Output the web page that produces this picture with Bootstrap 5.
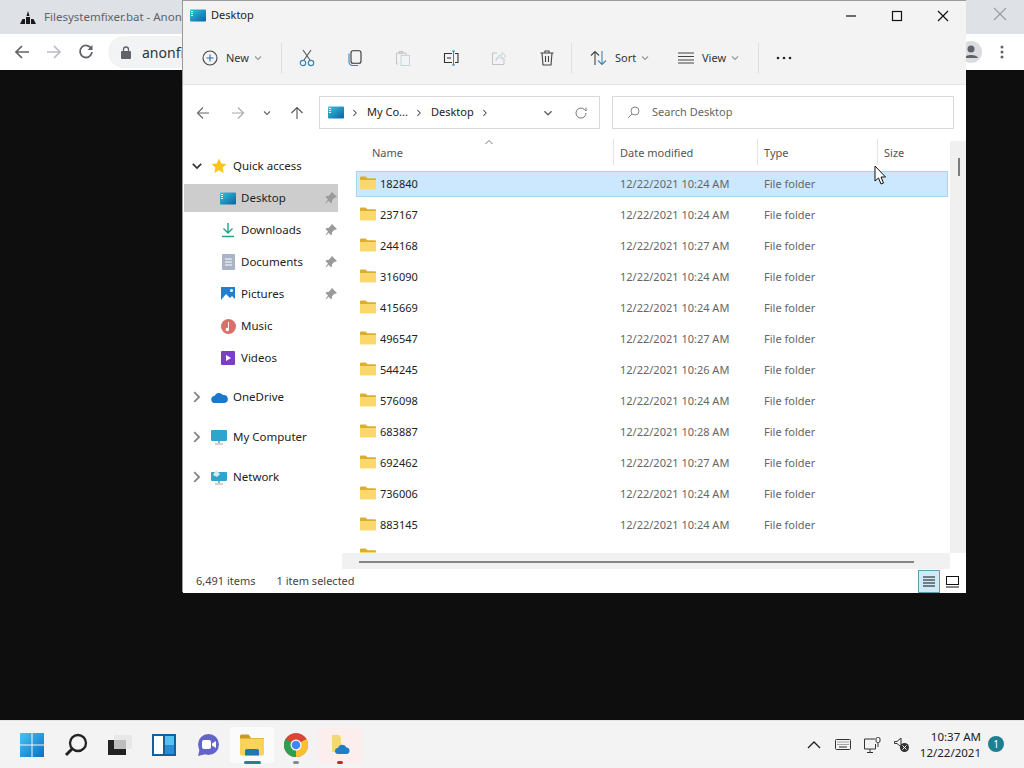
<!DOCTYPE html>
<html lang="en">
<head>
<meta charset="UTF-8">
<meta name="viewport" content="width=device-width, initial-scale=1.0">
<title>Desktop</title>
<link href="https://cdn.jsdelivr.net/npm/bootstrap@5.3.0/dist/css/bootstrap.min.css" rel="stylesheet">
<style>
html, body { height: 100%; }
body { width: 1024px; height: 768px; overflow: hidden; background: #0e0e0e; font-family: "Noto Sans", "Open Sans", sans-serif; font-size: 11px; color: #222; }
.desk-area { position: relative; height: 720px; background: #0e0e0e; }

/* chrome behind */
.chrome-win { position: absolute; left: 0; top: 0; width: 1024px; height: 70px; }
.chrome-tabs { height: 34px; background: #dee1e6; padding-left: 20px; color: #5f6368; }
.chrome-tabs .tab-title { margin-left: 8px; font-size: 11.500px; }
.chrome-close { position: absolute; left: 993px; top: 7px; }
.chrome-tools { height: 36px; background: #fff; padding-left: 14px; }
.omni { position: absolute; left: 108px; top: 36px; width: 300px; height: 32px; border-radius: 16px; background: #f1f3f4; padding-left: 13px; font-size: 14px; gap: 11px; color: #333; }
.chrome-side { position: absolute; left: 966px; top: 34px; width: 58px; height: 36px; }
.avatar-ic { position: absolute; left: -6px; top: 7px; }
.kebab-ic { position: absolute; left: 34px; top: 10px; }

/* explorer */
.exp-win { position: absolute; left: 182px; top: 0; width: 784px; height: 592px; background: #fff; border: 1px solid #9a9a9a; border-bottom: 0; border-right: 0; }
.exp-title { height: 29px; background: #f3f3f3; padding-left: 7px; color: #222; }
.exp-title span { margin-left: 5px; }
.win-btns { margin-left: auto; }
.win-btn { width: 46px; height: 29px; }
.cmd-bar { height: 55px; background: #f3f3f3; border-bottom: 1px solid #e5e5e5; padding: 2px 0 0 19px; }
.cmd-sep { width: 1px; height: 30px; background: #dfdfdf; flex: none; }
.cmd-lbl { color: #333; }
.cmd-ic { width: 48px; flex: none; }
.cmd-group { flex: none; }
.grp-new { width: 79px; }
.grp-sort { width: 88px; margin-left: 18px; }
.grp-view { width: 80px; }
.first-ic { margin-left: 1px; }
.more-ic { margin-left: 17px; }
.addr-row { height: 54px; padding: 11px 12px 0 2px; }
.nav-ic { width: 35px; height: 33px; flex: none; }
.nav-drop { width: 24px; height: 33px; flex: none; }
.addr-box { width: 281px; height: 33px; border: 1px solid #d9d9d9; margin-left: 5px; padding-left: 8px; color: #222; flex: none; }
.addr-box .crumb { margin: 0 8px 0 7px; }
.addr-drop { margin-left: auto; margin-right: 20px; }
.addr-ref { margin-right: 11px; }
.search-box { width: 342px; height: 33px; border: 1px solid #d9d9d9; margin-left: 12px; padding-left: 14px; color: #666; flex: none; }
.search-box span { margin-left: 12px; }
.exp-main { height: 430px; }
.side-pane { width: 158px; padding-top: 10px; flex: none; font-size: 11.500px; }
.tree-top { height: 33px; padding-left: 7px; }
.tree-root { height: 40px; padding-left: 7px; }
.tree-top .tree-ic, .tree-root .tree-ic { margin-left: 5px; }
.tree-root .tree-name, .tree-top .tree-name { margin-left: 4px; }
.tree-kid { height: 32px; padding-left: 35px; position: relative; }
.tree-kid .tree-name { margin-left: 3px; }
.tree-kid.on { background: #cdcdcd; height: 28px; margin: 2px 3px 2px 1px; padding-left: 34px; }
.tree-pin { position: absolute; right: 3px; top: 50%; margin-top: -7px; }
.tree-kid.on .tree-pin { right: 0; }
.tree-ic { width: 20px; display: flex; justify-content: center; }
.root-gap { height: 3px; }

.file-pane { position: relative; width: 626px; height: 414px; overflow: hidden; padding-left: 15px; }
.head-row { display: grid; grid-template-columns: 257px 144px 120px 1fr; height: 32px; color: #555; position: relative; }
.head-cell { padding: 2px 0 0 6px; border-left: 1px solid #e5e5e5; height: 26px; display: flex; align-items: center; }
.head-cell.first { border-left: 0; padding-left: 16px; }
.sort-mark { position: absolute; left: 128px; top: 0; }
.file-row { display: grid; grid-template-columns: 263px 144px 120px 1fr; height: 26px; margin-bottom: 5px; width: 592px; align-items: center; border: 1px solid transparent; color: #666; }
.file-row.sel { background: #cce8ff; border-color: #a9d6f5; }
.file-name { display: flex; align-items: center; padding-left: 3px; color: #222; gap: 4px; }
.file-name svg { margin-top: -2px; }
.vbar { position: absolute; left: 767px; top: 140px; width: 16px; height: 412px; background: #f0f0f0; }
.vthumb { position: absolute; left: 8px; top: 17px; width: 2px; height: 18px; background: #7d7d7d; }
.hbar { position: absolute; left: 159px; top: 552px; width: 608px; height: 16px; background: #f1f1f1; }
.hthumb { position: absolute; left: 17px; top: 8px; width: 555px; height: 2px; background: #868686; }
.status-bar { position: absolute; left: 0; right: 0; top: 568px; height: 24px; padding-left: 13px; color: #444; background: #fff; }
.status-bar .second { margin-left: 21px; }
.view-btns { position: absolute; left: 735px; top: 1px; width: 48px; height: 23px; }
.view-on { width: 22px; height: 23px; background: #cfe9f7; border: 1px solid #5f9db5; }
.view-off { width: 24px; height: 23px; }
.mouse-ptr { position: absolute; left: 874px; top: 165px; z-index: 5; }

/* taskbar */
.task-bar { position: relative; height: 48px; background: #f3f3f3; border-top: 1px solid #e4e4e4; padding-left: 10px; }
.task-ic { width: 44px; height: 36px; position: relative; }
.task-ic.open { background: #fbfbfb; border-radius: 4px; }
.task-ic.warn { background: #fdeeee; }
.run-dot { position: absolute; bottom: -1px; left: 50%; height: 3px; border-radius: 2px; }
.run-dot.long { width: 17px; margin-left: -8px; background: #2b7f86; }
.run-dot.short { width: 6px; margin-left: -3px; background: #8a8a8a; }
.run-dot.red { width: 6px; margin-left: -3px; background: #c8262c; }
.tray { margin-left: auto; padding-right: 43px; }
.tray-ic { width: 29px; }
.clock-txt { text-align: right; font-size: 11.500px; line-height: 16px; color: #222; margin-left: 4px; }
.notif { position: absolute; left: 988px; top: 15px; width: 16px; height: 16px; border-radius: 50%; background: #1f7f91; color: #fff; font-size: 10px; text-align: center; line-height: 16px; }
</style>
</head>
<body>
<svg width="0" height="0" class="position-absolute">
<defs>
<linearGradient id="gDesk" x1="0" y1="0" x2="1" y2="1"><stop offset="0" stop-color="#35c4d8"/><stop offset="1" stop-color="#0a62a8"/></linearGradient>
<linearGradient id="gWin" x1="0" y1="0" x2="1" y2="1"><stop offset="0" stop-color="#46c5f3"/><stop offset="1" stop-color="#0a6fc4"/></linearGradient>
<symbol id="i-folder" viewBox="0 0 16 14">
<path d="M0 1.500A1 1 0 0 1 1 .5h4.500l2 1.800H15a1 1 0 0 1 1 1V5H0z" fill="#dcae2f"/>
<path d="M0 4h16v8.500a1 1 0 0 1-1 1H1a1 1 0 0 1-1-1z" fill="#fbd86c"/>
</symbol>
<symbol id="i-desk" viewBox="0 0 16 13">
<rect width="16" height="12" y=".5" rx="1" fill="url(#gDesk)"/>
<path d="M1 2h2v1H1zM1 4h2v1H1zM1 6h2v1H1z" fill="#e8fbff"/>
</symbol>
<symbol id="i-pin" viewBox="0 0 14 14">
<path d="M8 1l5 5-1.500.8-1 0-2.500 2.500 0 2-1 1-2.500-2.500L2 12.500l-.5-.5L4 8.500 1.500 6l1-1 2 0L7 2.500l.2-1z" fill="#9a9a9a"/>
</symbol>
<symbol id="i-chev" viewBox="0 0 10 10">
<path d="M2 3.500l3 3 3-3" fill="none" stroke="currentColor" stroke-width="1.200"/>
</symbol>
<symbol id="i-right" viewBox="0 0 10 10">
<path d="M3 1.500l3.500 3.500-3.500 3.500" fill="none" stroke="currentColor" stroke-width="1.300"/>
</symbol>
</defs>
</svg>

<div class="desk-area">
  <!-- browser window behind -->
  <div class="chrome-win">
    <div class="chrome-tabs d-flex align-items-center">
      <svg width="16" height="14" viewBox="0 0 16 14"><path d="M0 14l2.500-5h2.500v5zM16 14l-2.500-5H11v5zM6 14V7h4v7zM6.500 6L8 1l1.500 5z" fill="#1b1b1b"/></svg>
      <span class="tab-title">Filesystemfixer.bat - Anon</span>
    </div>
    <svg class="chrome-close" width="14" height="14" viewBox="0 0 14 14"><path d="M1 1l12 12M13 1L1 13" stroke="#9aa0a6" stroke-width="1.300"/></svg>
    <div class="chrome-tools d-flex align-items-center">
      <svg width="16" height="16" viewBox="0 0 16 16"><path d="M15 8H2M8 2L2 8l6 6" fill="none" stroke="#5f6368" stroke-width="1.700"/></svg>
      <svg class="ms-3" width="16" height="16" viewBox="0 0 16 16"><path d="M1 8h13M8 2l6 6-6 6" fill="none" stroke="#b9bcc0" stroke-width="1.700"/></svg>
      <svg class="ms-3" width="16" height="16" viewBox="0 0 16 16"><path d="M13.500 5A6 6 0 1 0 14 8" fill="none" stroke="#5f6368" stroke-width="1.800"/><path d="M14.500 1v5h-5z" fill="#5f6368"/></svg>
    </div>
    <div class="omni d-flex align-items-center">
      <svg width="10" height="13" viewBox="0 0 10 13"><rect y="5" width="10" height="8" rx="1" fill="#5f6368"/><path d="M2.500 5V3.500a2.500 2.500 0 0 1 5 0V5" fill="none" stroke="#5f6368" stroke-width="1.300"/></svg>
      <span>anonfi</span>
    </div>
    <div class="chrome-side">
      <svg class="avatar-ic" width="22" height="22" viewBox="0 0 22 22"><circle cx="11" cy="11" r="11" fill="#dadce0"/><circle cx="11" cy="8" r="3.500" fill="#5f6368"/><path d="M4 17c1-4 13-4 14 0z" fill="#5f6368"/></svg>
      <svg class="kebab-ic" width="4" height="16" viewBox="0 0 4 16"><circle cx="2" cy="3" r="1.500" fill="#5f6368"/><circle cx="2" cy="8" r="1.500" fill="#5f6368"/><circle cx="2" cy="13" r="1.500" fill="#5f6368"/></svg>
    </div>
  </div>

  <!-- explorer window -->
  <div class="exp-win">
    <div class="exp-title d-flex align-items-center">
      <svg width="16" height="13"><use href="#i-desk"/></svg>
      <span>Desktop</span>
      <div class="win-btns d-flex">
        <div class="win-btn d-flex align-items-center justify-content-center"><svg width="12" height="12" viewBox="0 0 12 12"><path d="M1 6h10" stroke="#111" stroke-width="1.200"/></svg></div>
        <div class="win-btn d-flex align-items-center justify-content-center"><svg width="12" height="12" viewBox="0 0 12 12"><rect x="1.500" y="1.500" width="9" height="9" fill="none" stroke="#111" stroke-width="1.200"/></svg></div>
        <div class="win-btn d-flex align-items-center justify-content-center"><svg width="12" height="12" viewBox="0 0 12 12"><path d="M1 1l10 10M11 1L1 11" stroke="#111" stroke-width="1.200"/></svg></div>
      </div>
    </div>

    <div class="cmd-bar d-flex align-items-center">
      <div class="cmd-group grp-new d-flex align-items-center">
        <svg width="16" height="16" viewBox="0 0 16 16"><circle cx="8" cy="8" r="7" fill="none" stroke="#444" stroke-width="1.100"/><path d="M8 4.500v7M4.500 8h7" stroke="#2a6db0" stroke-width="1.100"/></svg>
        <span class="cmd-lbl ms-2">New</span>
        <svg class="ms-1" width="10" height="10" color="#999"><use href="#i-chev"/></svg>
      </div>
      <div class="cmd-sep"></div>
      <div class="cmd-ic first-ic d-flex justify-content-center"><svg width="16" height="18" viewBox="0 0 16 18"><path d="M4 1l7 10M12 1L5 11" stroke="#555" stroke-width="1.100" fill="none"/><circle cx="4" cy="14" r="2.700" fill="none" stroke="#3a85b8" stroke-width="1.200"/><circle cx="12" cy="14" r="2.700" fill="none" stroke="#3a85b8" stroke-width="1.200"/></svg></div>
      <div class="cmd-ic d-flex justify-content-center"><svg width="14" height="16" viewBox="0 0 14 16"><rect x="3" y=".7" width="10" height="12.500" rx="2" fill="none" stroke="#333" stroke-width="1.100"/><path d="M1 3.500V12a3.500 3.500 0 0 0 3.500 3.500H10" fill="none" stroke="#3a85b8" stroke-width="1.100"/></svg></div>
      <div class="cmd-ic d-flex justify-content-center"><svg width="16" height="16" viewBox="0 0 16 16"><path d="M3 14H1.500V3H11v2M4 1.500h4v2H4z" fill="none" stroke="#c3c3c3"/><rect x="6" y="5.500" width="8.500" height="10" fill="none" stroke="#c3d5df"/></svg></div>
      <div class="cmd-ic d-flex justify-content-center"><svg width="16" height="16" viewBox="0 0 16 16"><path d="M9 3.500H1.500v9H9" fill="none" stroke="#333" stroke-width="1.100"/><path d="M12 3.500h3v9h-3" fill="none" stroke="#333" stroke-width="1.100"/><path d="M10.500 1v14M9 1h3M9 15h3" stroke="#3a85b8"/><path d="M4 8h4" stroke="#333" stroke-width="1.100"/></svg></div>
      <div class="cmd-ic d-flex justify-content-center"><svg width="16" height="16" viewBox="0 0 16 16"><path d="M6 3H1.500v11.500H13V9" fill="none" stroke="#c3c3c3"/><path d="M5 11c0-4 3-6 6-6V2.500L15 6l-4 3.500V7c-3 0-5 1.500-6 4z" fill="none" stroke="#c3d5df"/></svg></div>
      <div class="cmd-ic d-flex justify-content-center"><svg width="14" height="16" viewBox="0 0 14 16"><path d="M.5 3h13M5 3V1h4v2M2 3l1 12h8l1-12M5.500 6v6M8.500 6v6" fill="none" stroke="#444" stroke-width="1.100"/></svg></div>
      <div class="cmd-sep"></div>
      <div class="cmd-group grp-sort d-flex align-items-center">
        <svg width="17" height="16" viewBox="0 0 17 16"><path d="M5 15V2M1 5.500L5 1.500l4 4" fill="none" stroke="#444" stroke-width="1.100"/><path d="M12 1v13M8 10.500l4 4 4-4" fill="none" stroke="#3a85b8" stroke-width="1.100"/></svg>
        <span class="cmd-lbl ms-2">Sort</span>
        <svg class="ms-1" width="10" height="10" color="#999"><use href="#i-chev"/></svg>
      </div>
      <div class="cmd-group grp-view d-flex align-items-center">
        <svg width="16" height="12" viewBox="0 0 16 12"><path d="M0 1h16M0 4.500h16M0 8h16M0 11h16" stroke="#444" stroke-width="1"/></svg>
        <span class="cmd-lbl ms-2">View</span>
        <svg class="ms-1" width="10" height="10" color="#999"><use href="#i-chev"/></svg>
      </div>
      <div class="cmd-sep"></div>
      <svg class="more-ic" width="16" height="4" viewBox="0 0 16 4"><circle cx="2" cy="2" r="1.300" fill="#222"/><circle cx="8" cy="2" r="1.300" fill="#222"/><circle cx="14" cy="2" r="1.300" fill="#222"/></svg>
    </div>

    <div class="addr-row d-flex align-items-start">
      <div class="nav-ic d-flex justify-content-center align-items-center"><svg width="14" height="14" viewBox="0 0 14 14"><path d="M13 7H1.500M7 1.500L1.500 7 7 12.500" fill="none" stroke="#666" stroke-width="1.100"/></svg></div>
      <div class="nav-ic d-flex justify-content-center align-items-center"><svg width="14" height="14" viewBox="0 0 14 14"><path d="M1 7h11.500M7 1.500L12.500 7 7 12.500" fill="none" stroke="#aaa" stroke-width="1.100"/></svg></div>
      <div class="nav-drop d-flex justify-content-center align-items-center"><svg width="10" height="10" color="#666"><use href="#i-chev"/></svg></div>
      <div class="nav-ic d-flex justify-content-center align-items-center"><svg width="14" height="14" viewBox="0 0 14 14"><path d="M7 13V1.500M1.500 7L7 1.500 12.500 7" fill="none" stroke="#555" stroke-width="1.100"/></svg></div>
      <div class="addr-box d-flex align-items-center">
        <svg width="16" height="13"><use href="#i-desk"/></svg>
        <svg class="crumb" width="8" height="10" color="#555"><use href="#i-right"/></svg>
        <span>My Co...</span>
        <svg class="crumb" width="8" height="10" color="#555"><use href="#i-right"/></svg>
        <span>Desktop</span>
        <svg class="crumb" width="8" height="10" color="#555"><use href="#i-right"/></svg>
        <svg class="addr-drop" width="12" height="12" color="#666"><use href="#i-chev"/></svg>
        <svg class="addr-ref" width="14" height="14" viewBox="0 0 14 14"><path d="M12 7a5 5 0 1 1-1.500-3.500L12 5V1.500" fill="none" stroke="#777"/></svg>
      </div>
      <div class="search-box d-flex align-items-center">
        <svg width="13" height="13" viewBox="0 0 13 13"><circle cx="8" cy="5" r="4" fill="none" stroke="#888"/><path d="M5 8l-4 4" stroke="#888"/></svg>
        <span>Search Desktop</span>
      </div>
    </div>

    <div class="d-flex exp-main">
      <div class="side-pane">
        <div class="tree-top d-flex align-items-center"><svg width="14" height="14" color="#333"><use href="#i-chev"/></svg><div class="tree-ic"><svg width="16" height="16" viewBox="0 0 16 16"><path d="M8 .5l2.300 5 5.200.6-3.900 3.500 1.100 5.400L8 12.300 3.300 15l1.100-5.400L.5 6.100l5.200-.6z" fill="#fcc419"/></svg></div><span class="tree-name">Quick access</span></div>
        <div id="kids"></div>
        <div class="root-gap"></div>
        <div class="tree-root d-flex align-items-center"><svg width="14" height="14" color="#888"><use href="#i-right"/></svg><div class="tree-ic"><svg width="17" height="11" viewBox="0 0 17 11"><path d="M4 11a3.500 3.500 0 0 1-.5-7A5 5 0 0 1 12 3a3.500 3.500 0 0 1 1.500 8z" fill="#1d78c9"/></svg></div><span class="tree-name">OneDrive</span></div>
        <div class="tree-root d-flex align-items-center"><svg width="14" height="14" color="#888"><use href="#i-right"/></svg><div class="tree-ic"><svg width="16" height="15" viewBox="0 0 16 15"><rect width="16" height="11" rx="1" fill="#2fa4cf"/><path d="M7 11h2v2H7zM4 13.500h8v1H4z" fill="#9aa7ae"/></svg></div><span class="tree-name">My Computer</span></div>
        <div class="tree-root d-flex align-items-center"><svg width="14" height="14" color="#888"><use href="#i-right"/></svg><div class="tree-ic"><svg width="16" height="16" viewBox="0 0 16 16"><rect y="3" width="16" height="9" rx="1" fill="#2fa4cf"/><path d="M2 6l3-5 4 4-3 3z" fill="#d8e8ef"/><path d="M7 12h2v2H7zM4 14.500h8v1H4z" fill="#9aa7ae"/></svg></div><span class="tree-name">Network</span></div>
      </div>
      <div class="file-pane">
        <div class="head-row">
          <div class="head-cell first">Name</div>
          <div class="head-cell">Date modified</div>
          <div class="head-cell">Type</div>
          <div class="head-cell">Size</div>
          <svg class="sort-mark" width="10" height="6" viewBox="0 0 10 6" color="#777"><path d="M1.500 5l3.500-3.500L8.500 5" fill="none" stroke="currentColor"/></svg>
        </div>
        <div id="rows"></div>
      </div>
    </div>

    <div class="vbar"><div class="vthumb"></div></div>
    <div class="hbar"><div class="hthumb"></div></div>
    <div class="status-bar d-flex align-items-center">
      <span>6,491 items</span><span class="second">1 item selected</span>
      <div class="view-btns d-flex">
        <div class="view-on d-flex align-items-center justify-content-center"><svg width="12" height="11" viewBox="0 0 12 11"><path d="M0 1h12M0 4h12M0 7h12M0 10h12" stroke="#111"/></svg></div>
        <div class="view-off d-flex align-items-center justify-content-center"><svg width="13" height="12" viewBox="0 0 13 12"><rect x=".5" y=".5" width="12" height="8" fill="none" stroke="#111"/><path d="M0 11h13" stroke="#111"/></svg></div>
      </div>
    </div>
  </div>

  <svg class="mouse-ptr" width="13" height="20" viewBox="0 0 13 20"><path d="M1 1v15l3.500-3 2.500 6 2.500-1-2.500-6h4.500z" fill="#fff" stroke="#111"/></svg>
</div>

<div class="task-bar d-flex align-items-center">
  <div class="task-ic d-flex align-items-center justify-content-center"><svg width="24" height="24" viewBox="0 0 24 24"><path d="M0 0h11.500v11.500H0zM12.500 0H24v11.500H12.500zM0 12.500h11.500V24H0zM12.500 12.500H24V24H12.500z" fill="url(#gWin)"/></svg></div>
  <div class="task-ic d-flex align-items-center justify-content-center"><svg width="24" height="24" viewBox="0 0 24 24"><circle cx="14" cy="10" r="8" fill="none" stroke="#222" stroke-width="2.300"/><path d="M8 16l-6 6" stroke="#222" stroke-width="3"/></svg></div>
  <div class="task-ic d-flex align-items-center justify-content-center"><svg width="24" height="20" viewBox="0 0 24 20"><rect x="6" y="0" width="18" height="14" fill="#e8e8e8"/><rect x="0" y="5" width="18" height="15" fill="#222"/><rect x="6" y="5" width="12" height="9" fill="#bdbdbd"/></svg></div>
  <div class="task-ic d-flex align-items-center justify-content-center"><svg width="24" height="22" viewBox="0 0 24 22"><rect x="1" y="1" width="22" height="20" fill="#fff" stroke="#14609f" stroke-width="2"/><rect x="11" y="1" width="2" height="20" fill="#14609f"/><rect x="13" y="2" width="9" height="9" fill="#55c3f0"/><rect x="13" y="11" width="9" height="9" fill="#2a8bd8"/></svg></div>
  <div class="task-ic d-flex align-items-center justify-content-center"><svg width="24" height="24" viewBox="0 0 24 24"><circle cx="12.500" cy="11.500" r="10.500" fill="#6264c7"/><path d="M2 23l2-8 6 6z" fill="#6264c7"/><rect x="6" y="7" width="9" height="9" rx="2" fill="#fff"/><path d="M16 10.500l4-2.500v7l-4-2.500z" fill="#fff"/></svg></div>
  <div class="task-ic open d-flex align-items-center justify-content-center"><svg width="24" height="22" viewBox="0 0 24 22"><path d="M0 2a1.500 1.500 0 0 1 1.500-1.500h7L11 4H24v3H0z" fill="#c99a25"/><path d="M0 4.500h24V20a1.500 1.500 0 0 1-1.500 1.500h-21A1.500 1.500 0 0 1 0 20z" fill="#fbd35a"/><path d="M5 21.500V17a2 2 0 0 1 2-2h10a2 2 0 0 1 2 2v4.500z" fill="#1e78b4"/></svg><div class="run-dot long"></div></div>
  <div class="task-ic d-flex align-items-center justify-content-center"><svg width="24" height="24" viewBox="0 0 24 24"><circle cx="12" cy="12" r="12" fill="#db4437"/><path d="M12 12L22.400 6A12 12 0 0 1 12 24z" fill="#fbc02d"/><path d="M12 12L12 24A12 12 0 0 1 1.600 6z" fill="#2e9e4f"/><circle cx="12" cy="12" r="5.500" fill="#fff"/><circle cx="12" cy="12" r="4.300" fill="#4285f4"/></svg><div class="run-dot short"></div></div>
  <div class="task-ic warn d-flex align-items-center justify-content-center"><svg width="22" height="22" viewBox="0 0 22 22"><path d="M3 1h7l2 3v14H3z" fill="#f3d873"/><path d="M9 20a3 3 0 0 1 0-6 4.500 4.500 0 0 1 8.500-.5A3.300 3.300 0 0 1 18 20z" fill="#1f7fc6"/></svg><div class="run-dot red"></div></div>
  <div class="tray d-flex align-items-center">
    <div class="tray-ic d-flex justify-content-center"><svg width="14" height="9" viewBox="0 0 14 9"><path d="M1 8l6-6 6 6" fill="none" stroke="#222" stroke-width="1.300"/></svg></div>
    <div class="tray-ic d-flex justify-content-center"><svg width="16" height="11" viewBox="0 0 16 11"><rect x=".5" y=".5" width="15" height="10" rx="1" fill="none" stroke="#333"/><path d="M2.500 3h11M2.500 5.500h11" stroke="#555" stroke-dasharray="1 1"/><path d="M4 8h8" stroke="#333"/></svg></div>
    <div class="tray-ic d-flex justify-content-center"><svg width="17" height="16" viewBox="0 0 17 16"><path d="M11 2H.5v10h11V7M6 12v3M3 15.500h6" fill="none" stroke="#333"/><rect x="12" y=".5" width="4" height="5" rx="1.500" fill="none" stroke="#333"/><path d="M14 6v4" stroke="#333"/></svg></div>
    <div class="tray-ic d-flex justify-content-center"><svg width="15" height="15" viewBox="0 0 15 15"><path d="M.5 4.500h2.500l4-3.500v9L3 6.500H.5z" fill="none" stroke="#333"/><circle cx="10.500" cy="10.500" r="4.500" fill="#333"/><path d="M8.500 8.500l4 4M12.500 8.500l-4 4" stroke="#fff"/></svg></div>
    <div class="clock-txt">10:37 AM<br>12/22/2021</div>
  </div>
  <div class="notif">1</div>
</div>

<script>
let hijos = [
  ["Desktop", '<svg width="16" height="13"><use href="#i-desk"/></svg>', true],
  ["Downloads", '<svg width="14" height="16" viewBox="0 0 14 16"><path d="M7 1v10M2.500 6.500L7 11l4.500-4.500" fill="none" stroke="#1fa58a" stroke-width="1.400"/><path d="M1 14.500h12" stroke="#1fa58a" stroke-width="1.500"/></svg>', true],
  ["Documents", '<svg width="13" height="16" viewBox="0 0 13 16"><rect width="13" height="16" rx="1" fill="#a9b4c6"/><path d="M3 5h7M3 8h7M3 11h7" stroke="#fff"/></svg>', true],
  ["Pictures", '<svg width="14" height="14" viewBox="0 0 14 14"><rect width="14" height="14" fill="#1f7fd0"/><path d="M0 13l5-6 4 4 2-2 3 3v2H0z" fill="#fff"/><circle cx="10.500" cy="3.500" r="1.500" fill="#fff"/></svg>', true],
  ["Music", '<svg width="15" height="15" viewBox="0 0 15 15"><circle cx="7.500" cy="7.500" r="7.500" fill="#d9706a"/><path d="M8 3v7.500a1.700 1.700 0 1 1-1-1.500V3z" fill="#fff"/></svg>', false],
  ["Videos", '<svg width="14" height="14" viewBox="0 0 14 14"><rect width="14" height="14" rx="1" fill="#7a3fc4"/><path d="M5 4l5 3-5 3z" fill="#fff"/></svg>', false]
];
document.getElementById("kids").innerHTML = hijos.map(h => `
  <div class="tree-kid d-flex align-items-center${h[0] == "Desktop" ? " on" : ""}">
    <div class="tree-ic">${h[1]}</div><span class="tree-name">${h[0]}</span>
    ${h[2] ? '<svg class="tree-pin" width="14" height="14"><use href="#i-pin"/></svg>' : ""}
  </div>`).join("");

let carpetas = [
  ["182840","10:24"],["237167","10:24"],["244168","10:27"],["316090","10:24"],["415669","10:24"],
  ["496547","10:27"],["544245","10:26"],["576098","10:24"],["683887","10:28"],["692462","10:27"],
  ["736006","10:24"],["883145","10:24"],["","10:24"]
];
document.getElementById("rows").innerHTML = carpetas.map((c, i) => `
  <div class="file-row${i == 0 ? " sel" : ""}">
    <div class="file-name"><svg width="16" height="14"><use href="#i-folder"/></svg><span>${c[0]}</span></div>
    <div>${c[0] ? "12/22/2021 " + c[1] + " AM" : ""}</div><div>${c[0] ? "File folder" : ""}</div><div></div>
  </div>`).join("");
</script>
<script src="https://cdn.jsdelivr.net/npm/bootstrap@5.3.0/dist/js/bootstrap.bundle.min.js"></script>
</body>
</html>
